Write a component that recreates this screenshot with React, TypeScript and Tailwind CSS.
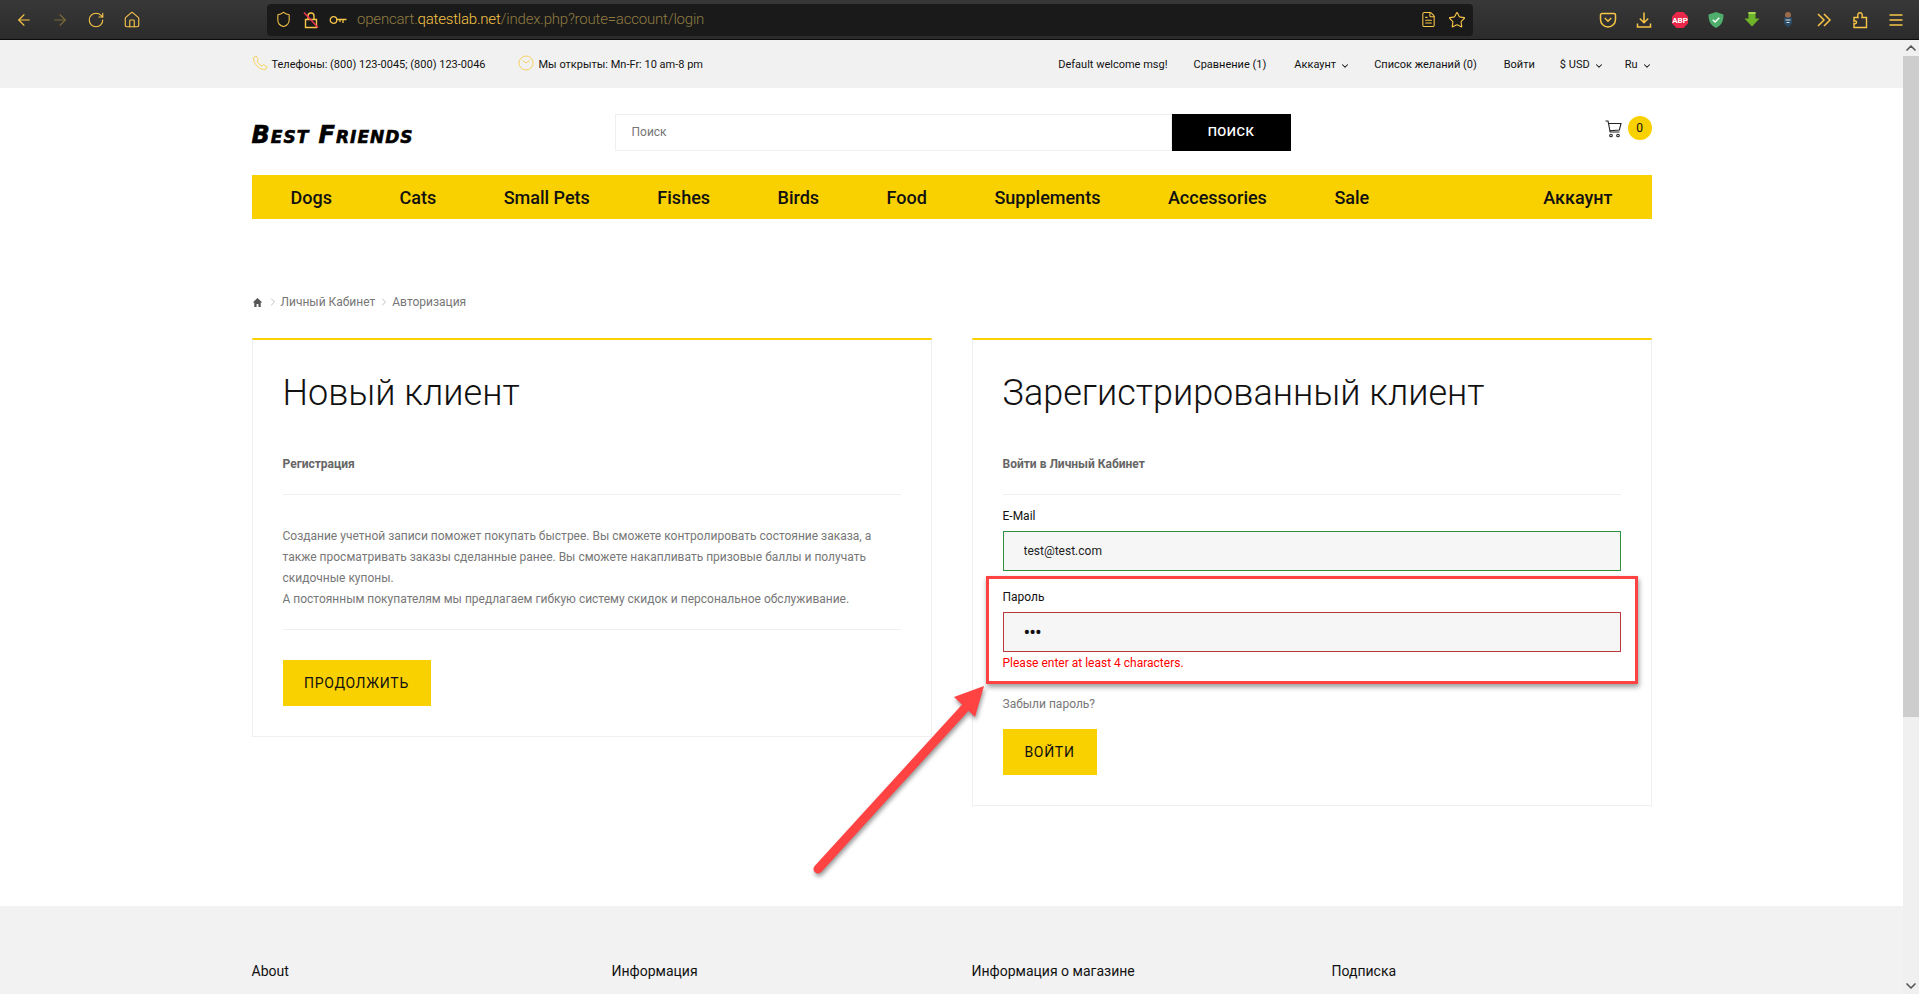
import { ArrowLeft, ArrowRight, RotateCw, House, Shield, FileText, Star, ChevronDown, ChevronRight, ChevronUp } from 'lucide-react';

const yellow = 'bg-[#f9d000]';

const navItems = ['Dogs', 'Cats', 'Small Pets', 'Fishes', 'Birds', 'Food', 'Supplements', 'Accessories', 'Sale'];

function Toolbar() {
  const iconClass = 'w-[18px] h-[18px] text-[#f7c548]';
  return (
    <div className="h-10 shrink-0 flex items-center bg-gradient-to-b from-[#383838] to-[#2b2b2b] border-b border-[#0c0c0c] pl-[15px] pr-[14px]">
      <div className="flex items-center gap-[18px] w-[252px]">
        <ArrowLeft className={iconClass} strokeWidth={1.5} />
        <ArrowRight className="w-[18px] h-[18px] text-[#7d6a3a]" strokeWidth={1.5} />
        <RotateCw className={iconClass} strokeWidth={1.5} />
        <House className={iconClass} strokeWidth={1.5} />
      </div>
      <div className="w-[1206px] h-8 bg-[#1a1a1a] rounded-[4px] flex items-center pl-[8px] pr-[7px]">
        <Shield className="w-[17px] h-[17px] text-[#f7c548]" strokeWidth={1.5} />
        <svg viewBox="0 0 16 18" className="w-[16px] h-[18px] ml-[11px]" fill="none" stroke="#f7c548" strokeWidth="1.4">
          <path d="M2.500 8.500h11v8h-11z" />
          <path d="M5 8.500V5a3 3 0 0 1 6 0v3.500" />
          <path d="M1 1.500L15 16.500" stroke="#ef3054" strokeWidth="1.500" />
        </svg>
        <svg viewBox="0 0 18 10" className="w-[18px] h-[10px] ml-[10px]" fill="none" stroke="#f7c548" strokeWidth="1.3">
          <circle cx="4.500" cy="5" r="3.300" />
          <path d="M8 4.500h9.500M14 4.500v3.500M11 4.500v2.500" />
        </svg>
        <div className="ml-[10px] text-[15px] tracking-[-0.2px] text-[#8f7a42] font-light">
          opencart.<span className="text-[#f7c548]">qatestlab.net</span>/index.php?route=account/login
        </div>
        <div className="ml-auto flex items-center gap-[11px]">
          <FileText className="w-[17px] h-[17px] text-[#f7c548]" strokeWidth={1.5} />
          <Star className={iconClass} strokeWidth={1.5} />
        </div>
      </div>
      <div className="ml-auto flex items-center gap-[18px]">
        <svg viewBox="0 0 18 18" className="w-[18px] h-[18px]" fill="none" stroke="#f7c548" strokeWidth="1.500">
          <path d="M3 2.500h12a1.500 1.500 0 0 1 1.500 1.500v4.500a7.500 7.500 0 0 1-15 0V4A1.500 1.500 0 0 1 3 2.500z" />
          <path d="M5.800 7l3.200 3.200L12.200 7" />
        </svg>
        <svg viewBox="0 0 18 18" className="w-[18px] h-[18px]" fill="none" stroke="#f7c548" strokeWidth="1.500">
          <path d="M9 1.500v10M4.800 7.500L9 11.700l4.200-4.200" />
          <path d="M2.500 12.500v3.500h13v-3.500" />
        </svg>
        <svg viewBox="0 0 18 18" className="w-[18px] h-[18px]">
          <path d="M5.500 1h7L17 5.500v7L12.500 17h-7L1 12.500v-7z" fill="#e8274b" />
          <text x="9" y="12" textAnchor="middle" fontSize="8" fontWeight="700" fill="#fff" fontFamily="Roboto, sans-serif">ABP</text>
        </svg>
        <svg viewBox="0 0 18 18" className="w-[18px] h-[18px]">
          <path d="M9 1l7.500 2.500c0 6-1.500 10.500-7.500 13.500C3 14 1.500 9.500 1.500 3.500z" fill="#4fae6b" />
          <path d="M5.800 8.800l2.300 2.300 4.200-4.300" fill="none" stroke="#fff" strokeWidth="1.400" />
        </svg>
        <svg viewBox="0 0 18 18" className="w-[18px] h-[18px]">
          <path d="M5.500 1h7v6.500h4L9 15.500 1.500 7.500h4z" fill="#6fb32a" />
          <path d="M5.500 1h7v2h-7z" fill="#a5d957" />
        </svg>
        <svg viewBox="0 0 18 18" className="w-[18px] h-[18px]">
          <circle cx="9" cy="4" r="3" fill="#9a6a4a" />
          <path d="M5 6.500h8v6l-4 4-4-4z" fill="#2c4a63" />
          <path d="M6.500 9h5M7.500 11.500h3" stroke="#d8e2ea" strokeWidth="1" />
        </svg>
        <svg viewBox="0 0 18 18" className="w-[18px] h-[18px]" fill="none" stroke="#f7c548" strokeWidth="1.500">
          <path d="M3 3l6 6-6 6M9 3l6 6-6 6" />
        </svg>
        <svg viewBox="0 0 18 18" className="w-[18px] h-[18px]" fill="none" stroke="#f7c548" strokeWidth="1.400">
          <path d="M3 16.500V12.500c1.800.6 2.500-.4 2.500-1.300S4.800 9.600 3 10.200V6.500h4C6.400 4.800 6.900 3.900 7 3c.2-1.700 3.800-1.700 4 0 .1.900.6 1.800 0 3.500h4.500v10z" />
        </svg>
        <svg viewBox="0 0 18 18" className="w-[18px] h-[18px]" stroke="#f7c548" strokeWidth="1.500">
          <path d="M2.500 4h13M2.500 9h13M2.500 14h13" />
        </svg>
      </div>
    </div>
  );
}

function TopBar() {
  return (
    <div className="h-12 bg-[#f1f1f1]">
      <div className="w-[1400px] mx-auto h-full flex items-center text-[11px] text-[#111] pt-[3px]">
        <svg viewBox="0 0 16 16" className="w-[16px] h-[16px] -mt-[5px]" fill="none" stroke="#f7d15e" strokeWidth="1">
          <path d="M1.500 2.500L4 1l2.500 3.500L5 6c.8 2 2.500 4 5 5l1.500-1.500L15 12l-1.500 2.500C8 15.500 1 9 1.500 2.500z" />
        </svg>
        <span className="ml-[4px]">Телефоны: (800) 123-0045; (800) 123-0046</span>
        <svg viewBox="0 0 16 16" className="w-[16px] h-[16px] ml-[32px] -mt-[6px]" fill="none" stroke="#f7d15e" strokeWidth="1">
          <circle cx="8" cy="8" r="7" />
          <path d="M4.500 5.500L8 8l3.500-2.500" />
        </svg>
        <span className="ml-[5px]">Мы открыты: Mn-Fr: 10 am-8 pm</span>
        <div className="ml-auto flex items-center">
          <span>Default welcome msg!</span>
          <span className="ml-[26px]">Сравнение (1)</span>
          <span className="ml-[28px] flex items-center gap-[4px]">Аккаунт <ChevronDown className="w-[10px] h-[10px]" strokeWidth={2.5} /></span>
          <span className="ml-[24px]">Список желаний (0)</span>
          <span className="ml-[27px]">Войти</span>
          <span className="ml-[25px] flex items-center gap-[4px]">$ USD <ChevronDown className="w-[10px] h-[10px]" strokeWidth={2.5} /></span>
          <span className="ml-[21px] flex items-center gap-[4px]">Ru <ChevronDown className="w-[10px] h-[10px]" strokeWidth={2.5} /></span>
        </div>
      </div>
    </div>
  );
}

function Header() {
  return (
    <div className="w-[1400px] mx-auto">
      <div className="h-[87px] flex items-center">
        <div className="w-[363px] mt-[7px] [font-family:'DejaVu_Sans',sans-serif] font-bold italic text-[24px] [font-variant:small-caps] tracking-[1px] text-black [-webkit-text-stroke:0.6px_black]">
          Best Friends
        </div>
        <div className="flex w-[676px] h-[37px] mt-[1px]">
          <input
            readOnly
            placeholder="Поиск"
            className="flex-1 min-w-0 border border-[#efefef] px-[16px] text-[12px] outline-none placeholder:text-[#777]"
          />
          <button className="w-[119px] bg-black text-white text-[13px] font-medium tracking-[0.5px]">ПОИСК</button>
        </div>
        <div className="ml-auto flex items-center gap-[6px] -mt-[7px]">
          <svg viewBox="0 0 17 18" className="w-[17px] h-[18px] mt-[2px]" fill="none" stroke="#222" strokeWidth="1.100">
            <path d="M.5 1h2.500l2.200 11h9.300" />
            <path d="M3.400 3.500h12.600l-1.600 6.500-9.800.8" />
            <circle cx="6" cy="15.500" r="1.300" />
            <circle cx="13" cy="15.500" r="1.300" />
          </svg>
          <div className={`w-6 h-6 rounded-full ${yellow} flex items-center justify-center text-[12px] text-[#111]`}>0</div>
        </div>
      </div>
      <div className={`h-11 ${yellow} flex items-center px-[39px] text-[18px] font-medium text-[#111]`}>
        <div className="flex gap-[67.5px]">
          {navItems.map((item) => (
            <span key={item}>{item}</span>
          ))}
        </div>
        <span className="ml-auto">Аккаунт</span>
      </div>
    </div>
  );
}

function Breadcrumb() {
  return (
    <div className="h-[119px] pt-[75px] flex items-start text-[12px] text-[#777]">
      <div className="flex items-center h-4">
        <svg viewBox="0 0 12 12" className="w-[11px] h-[11px]" fill="#555"><path d="M6 1L.8 6h1.700v5h2.500V7.500h2V11h2.500V6h1.700z" /></svg>
        <ChevronRight className="w-3 h-3 ml-[4px] mr-[2px] text-[#aaa]" strokeWidth={1.5} />
        <span>Личный Кабинет</span>
        <ChevronRight className="w-3 h-3 ml-[3px] mr-[2px] text-[#aaa]" strokeWidth={1.5} />
        <span>Авторизация</span>
      </div>
    </div>
  );
}

function Panel({ title, sub, children }: { title: string; sub: string; children: React.ReactNode }) {
  return (
    <div className="border border-[#efefef] border-t-2 border-t-[#f9d000] px-[30px]">
      <h1 className="text-[36px] font-light text-[#111] leading-[42px] mt-[32px]">{title}</h1>
      <div className="mt-[43px] pb-[22px] border-b border-[#efefef] text-[12px] font-bold text-[#666] leading-[15px]">{sub}</div>
      {children}
    </div>
  );
}

export default function App() {
  return (
    <div className="h-[994px] overflow-hidden relative flex flex-col bg-white [font-family:Roboto,sans-serif]">
      <Toolbar />
      <div className="flex-1 min-h-0 flex">
        <div className="flex-1 min-w-0">
          <TopBar />
          <Header />
          <div className="w-[1400px] mx-auto">
            <Breadcrumb />
            <div className="grid grid-cols-2 gap-10 items-start">
              <Panel title="Новый клиент" sub="Регистрация">
                <div className="mt-[31px] pb-[19px] border-b border-[#efefef] text-[12px] leading-[21px] text-[#777]">
                  <p>Создание учетной записи поможет покупать быстрее. Вы сможете контролировать состояние заказа, а</p>
                  <p>также просматривать заказы сделанные ранее. Вы сможете накапливать призовые баллы и получать</p>
                  <p>скидочные купоны.</p>
                  <p>А постоянным покупателям мы предлагаем гибкую систему скидок и персональное обслуживание.</p>
                </div>
                <button className={`mt-[30px] mb-[30px] block w-[148px] h-[46px] ${yellow} text-[14px] tracking-[0.7px] text-[#111]`}>ПРОДОЛЖИТЬ</button>
              </Panel>
              <Panel title="Зарегистрированный клиент" sub="Войти в Личный Кабинет">
                <label className="block mt-[14px] text-[12px] leading-[14px] text-[#111]">E-Mail</label>
                <input
                  readOnly
                  defaultValue="test@test.com"
                  className="block w-full mt-[8px] h-10 bg-[#f6f6f6] border border-[#2f8f3d] pl-[20px] text-[12px] text-[#222] outline-none"
                />
                <label className="block mt-[19px] text-[12px] leading-[14px] text-[#111]">Пароль</label>
                <input
                  readOnly
                  type="password"
                  defaultValue="123"
                  className="block w-full mt-[8px] h-10 bg-[#f6f6f6] border border-[#b8393d] pl-[20px] text-[20px] tracking-[-1px] text-[#111] outline-none"
                />
                <div className="mt-[4px] text-[12px] leading-[14px] text-[#ff0000]">Please enter at least 4 characters.</div>
                <div className="mt-[27px] text-[12px] leading-[14px] text-[#777]">Забыли пароль?</div>
                <button className={`mt-[18px] mb-[30px] block w-[94px] h-[46px] ${yellow} text-[14px] tracking-[0.7px] text-[#111]`}>ВОЙТИ</button>
              </Panel>
            </div>
          </div>
          <div className="mt-[100px] h-[200px] bg-[#f2f2f2]">
            <div className="w-[1400px] mx-auto grid grid-cols-4 gap-10 pt-[55px] text-[14px] text-[#111]">
              <span>About</span>
              <span>Информация</span>
              <span>Информация о магазине</span>
              <span>Подписка</span>
            </div>
          </div>
        </div>
        <div className="w-4 shrink-0 bg-[#f0f0f0] flex flex-col items-center">
          <ChevronUp className="w-4 h-4 text-[#555] shrink-0" strokeWidth={2.5} />
          <div className="w-full h-[661px] bg-[#cdcdcd]" />
          <ChevronDown className="w-4 h-4 text-[#555] mt-auto shrink-0" strokeWidth={2.5} />
        </div>
      </div>

      {/* annotation over the form */}
      <div className="absolute left-[986px] top-[576px] w-[652px] h-[108px] border-[3px] border-[#ff4343] shadow-[1px_3px_5px_rgba(0,0,0,0.4)]" />
      <svg className="absolute left-[800px] top-[670px] w-[200px] h-[220px] drop-shadow-[1px_3px_2px_rgba(0,0,0,0.4)]" viewBox="0 0 200 220" fill="none">
        <path d="M18 199L165 38" stroke="#ff4343" strokeWidth="9" strokeLinecap="round" />
        <path d="M184 16L154 27L175 47z" fill="#ff4343" />
      </svg>
    </div>
  );
}
